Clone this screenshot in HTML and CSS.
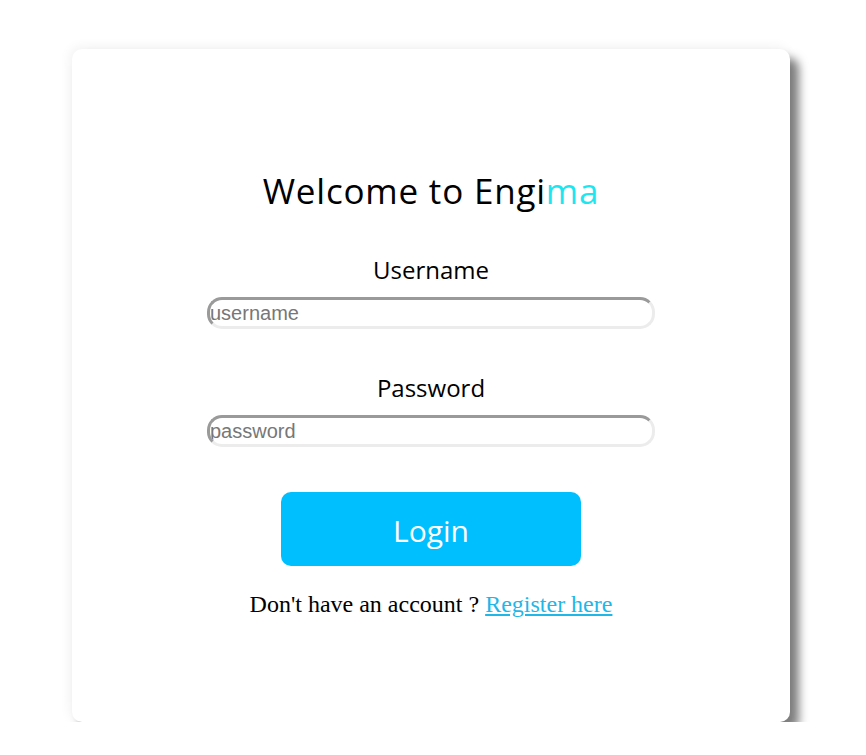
FILE: index.html
```html
<!DOCTYPE html>
<html>
<head>
<meta charset="utf-8">
<link rel="stylesheet" href="styles.css">
</head>
<body>
<div class="card">
  <h1 class="title">Welcome to Engi<span class="accent">ma</span></h1>
  <form class="form">
    <label class="label" for="u">Username</label>
    <input class="field" id="u" type="text" placeholder="username">
    <label class="label" for="p">Password</label>
    <input class="field" id="p" type="password" placeholder="password">
    <button class="btn" type="button">Login</button>
    <p class="note">Don't have an account ? <a class="link" href="#">Register here</a></p>
  </form>
</div>
</body>
</html>
```
FILE: styles.css
```css
html, body { margin: 0; padding: 0; background: #fff; }
body { padding: 49px 0 0 72px; }
.card {
  width: 718px;
  height: 673px;
  box-sizing: border-box;
  background: #fff;
  border-radius: 10px;
  box-shadow: 9px 9px 10px rgba(0,0,0,0.5), -2px -2px 12px rgba(0,0,0,0.06);
  display: flex;
  flex-direction: column;
  align-items: center;
  padding-top: 120px;
}
.title {
  margin: 0;
  font-family: "Open Sans", sans-serif;
  font-weight: 500;
  font-size: 35px;
  line-height: 44px;
  color: #000;
  letter-spacing: 0.8px;
}
.accent { color: #1ee6f0; }
.form { display: flex; flex-direction: column; align-items: center; margin-top: 42px; }
.label {
  font-family: "Open Sans", sans-serif;
  font-weight: 500;
  font-size: 24px;
  line-height: 30px;
  color: #000;
  margin-bottom: 12px;
}
.field {
  width: 448px;
  height: 32px;
  box-sizing: border-box;
  border: 3px solid;
  border-color: #9a9a9a #ececec #ececec #9a9a9a;
  border-radius: 15px;
  padding: 0;
  font-family: "Liberation Sans", Arial, sans-serif;
  font-size: 20px;
  margin-bottom: 44px;
  outline: none;
}
.field::placeholder { color: #777; }
.btn {
  margin-top: 1px;
  width: 300px;
  height: 74px;
  padding-top: 3px;
  border: none;
  border-radius: 10px;
  background: #00bfff;
  color: #fff;
  font-family: "Open Sans", sans-serif;
  font-size: 30px;
}
.note {
  margin: 24px 0 0;
  font-family: "Liberation Serif", "Times New Roman", serif;
  font-size: 24px;
  line-height: 28px;
  color: #000;
}
.link { color: #1fb6e8; }
```
